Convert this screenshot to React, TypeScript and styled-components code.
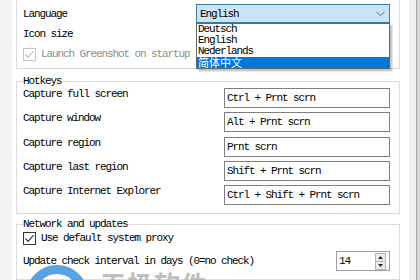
import styled, { createGlobalStyle } from "styled-components";

const GlobalStyle = createGlobalStyle`
  html, body {
    margin: 0;
    padding: 0;
    background: #fff;
  }
  body {
    width: 420px;
    height: 280px;
    overflow: hidden;
  }
`;

const WinFont = `"Liberation Mono", "Noto Sans CJK SC", monospace`;

const Window = styled.div`
  position: relative;
  display: flex;
  width: 420px;
  height: 280px;
  overflow: hidden;
  background: #f0f0f0;
  font-family: ${WinFont};
  font-size: 11px;
  letter-spacing: -1.1px;
  line-height: 12px;
  color: #000;
`;

const LeftEdge = styled.div`
  flex: none;
  width: 12px;
  background: #f2f2f2;
`;

const RightEdge = styled.div`
  flex: 1;
  display: flex;
  justify-content: flex-end;
  background: #f0f0f0;

  &::after {
    content: "";
    width: 3px;
    border-left: 1px solid #a4a4a4;
    background: #d6d6d6;
  }
`;

const Page = styled.div`
  flex: none;
  width: 397px;
  box-sizing: border-box;
  padding: 0 9px 0 4px;
  background: #fff;
  display: flex;
  flex-direction: column;
`;

const TopGroup = styled.div`
  border: 1px solid #dcdcdc;
  border-top: none;
  padding: 4px 9px 4px 6px;
  display: grid;
  grid-template-columns: 173px 1fr;
  grid-template-rows: 19px 21px 20px;
  align-items: center;
`;

const Group = styled.fieldset<{ $gap: number }>`
  margin: ${(p) => p.$gap}px 0 0;
  border: 1px solid #dcdcdc;
  padding: 1px 9px 8px 6px;
  min-width: 0;

  legend {
    padding: 0 1px 0 0;
    line-height: 12px;
  }
`;

const HotkeyGrid = styled.div`
  display: grid;
  grid-template-columns: 201px 1fr;
  row-gap: 4.25px;
`;

const Label = styled.span<{ $muted?: boolean }>`
  white-space: nowrap;
  color: ${(p) => (p.$muted ? "#8d8d8d" : "#000")};
`;

const HotkeyLabel = styled(Label)`
  align-self: start;
  line-height: 12px;
`;

const TextBox = styled.div`
  height: 20px;
  box-sizing: border-box;
  border: 1px solid #7f7f7f;
  padding-left: 2px;
  display: flex;
  align-items: center;
  white-space: nowrap;
  background: #fff;
`;

const ComboWrap = styled.div`
  position: relative;
  height: 19px;
`;

const Combo = styled.div`
  height: 19px;
  box-sizing: border-box;
  border: 1px solid #3a7bab;
  background: #cce4f7;
  padding: 0 4px 0 3px;
  display: flex;
  align-items: center;
  justify-content: space-between;
`;

const DropList = styled.div`
  position: absolute;
  top: 19px;
  left: 0;
  width: 194px;
  box-sizing: border-box;
  border: 1px solid #5f6a72;
  background: #fff;
  box-shadow: 2px 2px 2px rgba(0, 0, 0, 0.28);
  z-index: 2;
`;

const DropItem = styled.div<{ $selected?: boolean }>`
  height: 11px;
  line-height: 11px;
  padding-left: 1px;
  background: ${(p) => (p.$selected ? "#0078d7" : "transparent")};
  color: ${(p) => (p.$selected ? "#fff" : "#000")};
`;

const Cjk = styled.span`
  font-family: "Noto Sans CJK SC", sans-serif;
  letter-spacing: 0;
  font-size: 11px;
`;

const CheckRow = styled.div`
  display: flex;
  align-items: center;
  gap: 5px;
  height: 14px;
`;

const Box = styled.span<{ $disabled?: boolean }>`
  width: 13px;
  height: 13px;
  box-sizing: border-box;
  border: 1px solid ${(p) => (p.$disabled ? "#c4c4c4" : "#333")};
  background: #fff;
  display: flex;
  align-items: center;
  justify-content: center;
  flex: none;
`;

const UpdateRow = styled.div`
  margin-top: 6px;
  display: flex;
  align-items: center;
  justify-content: space-between;
`;

const Numeric = styled.div`
  width: 54px;
  height: 20px;
  box-sizing: border-box;
  border: 1px solid #a0a0a0;
  display: flex;
  align-items: center;
  justify-content: space-between;
  padding: 0 3px 0 2px;
`;

const Spin = styled.div`
  display: flex;
  flex-direction: column;
  width: 11px;
`;

const SpinButton = styled.div`
  height: 7px;
  border: 1px solid #b6b6b6;
  background: #ececec;
  display: flex;
  align-items: center;
  justify-content: center;

  & + & {
    border-top: none;
  }
`;

const Ring = styled.div`
  position: absolute;
  left: 26px;
  top: 265px;
  width: 62px;
  height: 62px;
  box-sizing: border-box;
  border-radius: 50%;
  border: 9px solid #3b93dc;
  opacity: 0.85;
`;

const Mark = styled.div`
  position: absolute;
  left: 100px;
  top: 269px;
  font-family: "Noto Sans CJK SC", sans-serif;
  font-size: 26px;
  line-height: 30px;
  font-weight: 700;
  letter-spacing: 1px;
  color: #b4b4b4;
  opacity: 0.85;
`;

const Check = ({ color }: { color: string }) => (
  <svg width="11" height="11" viewBox="0 0 11 11">
    <path d="M1.5 5.5 L4.2 8.3 L9.5 2.2" fill="none" stroke={color} strokeWidth="1.2" />
  </svg>
);

const hotkeys = [
  ["Capture full screen", "Ctrl + Prnt scrn"],
  ["Capture window", "Alt + Prnt scrn"],
  ["Capture region", "Prnt scrn"],
  ["Capture last region", "Shift + Prnt scrn"],
  ["Capture Internet Explorer", "Ctrl + Shift + Prnt scrn"],
];

const languages = ["Deutsch", "English", "Nederlands"];

export default function App() {
  return (
    <Window>
      <GlobalStyle />
      <LeftEdge />
      <Page>
        <TopGroup>
          <Label>Language</Label>
          <ComboWrap>
            <Combo>
              <span>English</span>
              <svg width="9" height="6" viewBox="0 0 9 6">
                <path d="M0.5 0.8 L4.5 4.8 L8.5 0.8" fill="none" stroke="#5a6f80" strokeWidth="1" />
              </svg>
            </Combo>
            <DropList>
              {languages.map((l) => (
                <DropItem key={l}>{l}</DropItem>
              ))}
              <DropItem $selected>
                <Cjk>简体中文</Cjk>
              </DropItem>
            </DropList>
          </ComboWrap>
          <Label>Icon size</Label>
          <span />
          <CheckRow>
            <Box $disabled>
              <Check color="#c4c4c4" />
            </Box>
            <Label $muted>Launch Greenshot on startup</Label>
          </CheckRow>
          <span />
        </TopGroup>

        <Group $gap={6}>
          <legend>Hotkeys</legend>
          <HotkeyGrid>
            {hotkeys.map(([name, key]) => (
              <>
                <HotkeyLabel key={name}>{name}</HotkeyLabel>
                <TextBox key={key}>{key}</TextBox>
              </>
            ))}
          </HotkeyGrid>
        </Group>

        <Group $gap={4}>
          <legend>Network and updates</legend>
          <CheckRow>
            <Box>
              <Check color="#333" />
            </Box>
            <Label>Use default system proxy</Label>
          </CheckRow>
          <UpdateRow>
            <Label>Update check interval in days (0=no check)</Label>
            <Numeric>
              <span>14</span>
              <Spin>
                <SpinButton>
                  <svg width="5" height="3" viewBox="0 0 5 3">
                    <path d="M0 3 L2.5 0 L5 3 Z" fill="#222" />
                  </svg>
                </SpinButton>
                <SpinButton>
                  <svg width="5" height="3" viewBox="0 0 5 3">
                    <path d="M0 0 L2.5 3 L5 0 Z" fill="#222" />
                  </svg>
                </SpinButton>
              </Spin>
            </Numeric>
          </UpdateRow>
        </Group>
      </Page>
      <RightEdge />
      <Ring />
      <Mark>天极软件</Mark>
    </Window>
  );
}
